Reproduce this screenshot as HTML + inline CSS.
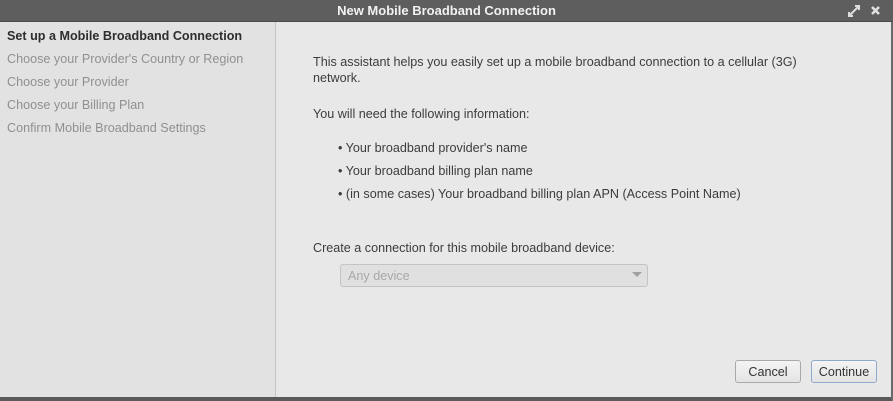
<!DOCTYPE html>
<html><head><style>
*{margin:0;padding:0;box-sizing:border-box}
body{width:893px;height:401px;overflow:hidden;background:#e8e8e8;font-family:"Liberation Sans",sans-serif;font-size:12.6px;color:#3c3c3c;position:relative}
.t{position:absolute;white-space:nowrap;line-height:16px}
#title{position:absolute;left:0;top:0;width:893px;height:22px;background:#5e5e5e;border-bottom:1px solid #4a4a4a;color:#f2f2f2;font-weight:bold;font-size:13px;text-align:center;line-height:22px}
#side{position:absolute;left:0;top:22px;width:276px;height:375px;background:#e2e2e2;border-right:1px solid #c4c4c4}
.g{color:#909090}
.btn{position:absolute;height:23px;border:1px solid #a9a9a9;border-radius:3px;background:linear-gradient(#f4f4f4,#e4e4e4);text-align:center;line-height:21px;color:#333}
</style></head><body>
<div id="title">New Mobile Broadband Connection
<svg style="position:absolute;left:846px;top:4px" width="16" height="14" viewBox="0 0 16 14"><path d="M3 12 L13 2 M9 2 H13 V6 M3 8 V12 H7" stroke="#ddd" stroke-width="2" fill="none"/></svg>
<svg style="position:absolute;left:870px;top:5px" width="11" height="11" viewBox="0 0 11 11"><path d="M2 2 L9 9 M9 2 L2 9" stroke="#e0e0e0" stroke-width="2.6"/></svg>
</div>
<div id="side">
<div class="t" style="left:7px;top:6px;font-weight:bold;color:#2e2e2e">Set up a Mobile Broadband Connection</div>
<div class="t g" style="left:7px;top:29px">Choose your Provider's Country or Region</div>
<div class="t g" style="left:7px;top:52px">Choose your Provider</div>
<div class="t g" style="left:7px;top:75px">Choose your Billing Plan</div>
<div class="t g" style="left:7px;top:98px">Confirm Mobile Broadband Settings</div>
</div>
<div class="t" style="left:313px;top:54px">This assistant helps you easily set up a mobile broadband connection to a cellular (3G)</div>
<div class="t" style="left:313px;top:70px">network.</div>
<div class="t" style="left:313px;top:106px">You will need the following information:</div>
<div class="t" style="left:338px;top:140px">• Your broadband provider's name</div>
<div class="t" style="left:338px;top:163px">• Your broadband billing plan name</div>
<div class="t" style="left:338px;top:186px">• (in some cases) Your broadband billing plan APN (Access Point Name)</div>
<div class="t" style="left:313px;top:240px">Create a connection for this mobile broadband device:</div>
<div style="position:absolute;left:340px;top:264px;width:308px;height:23px;border:1px solid #c4c4c4;border-radius:3px;background:#e0e0e0"></div>
<div class="t" style="left:348px;top:268px;color:#a8a8a8">Any device</div>
<svg style="position:absolute;left:632px;top:272px" width="10" height="6"><path d="M0 0 H10 L5 5Z" fill="#a0a0a0"/></svg>
<div class="btn" style="left:735px;top:360px;width:66px;line-height:22px">Cancel</div>
<div class="btn" style="left:811px;top:360px;width:66px;border-color:#8fa9cc;line-height:22px">Continue</div>
<div style="position:absolute;left:0;top:397px;width:893px;height:4px;background:#5a5a5a"></div>
<div style="position:absolute;left:891px;top:22px;width:2px;height:379px;background:#6a6a6a"></div>
</body></html>
